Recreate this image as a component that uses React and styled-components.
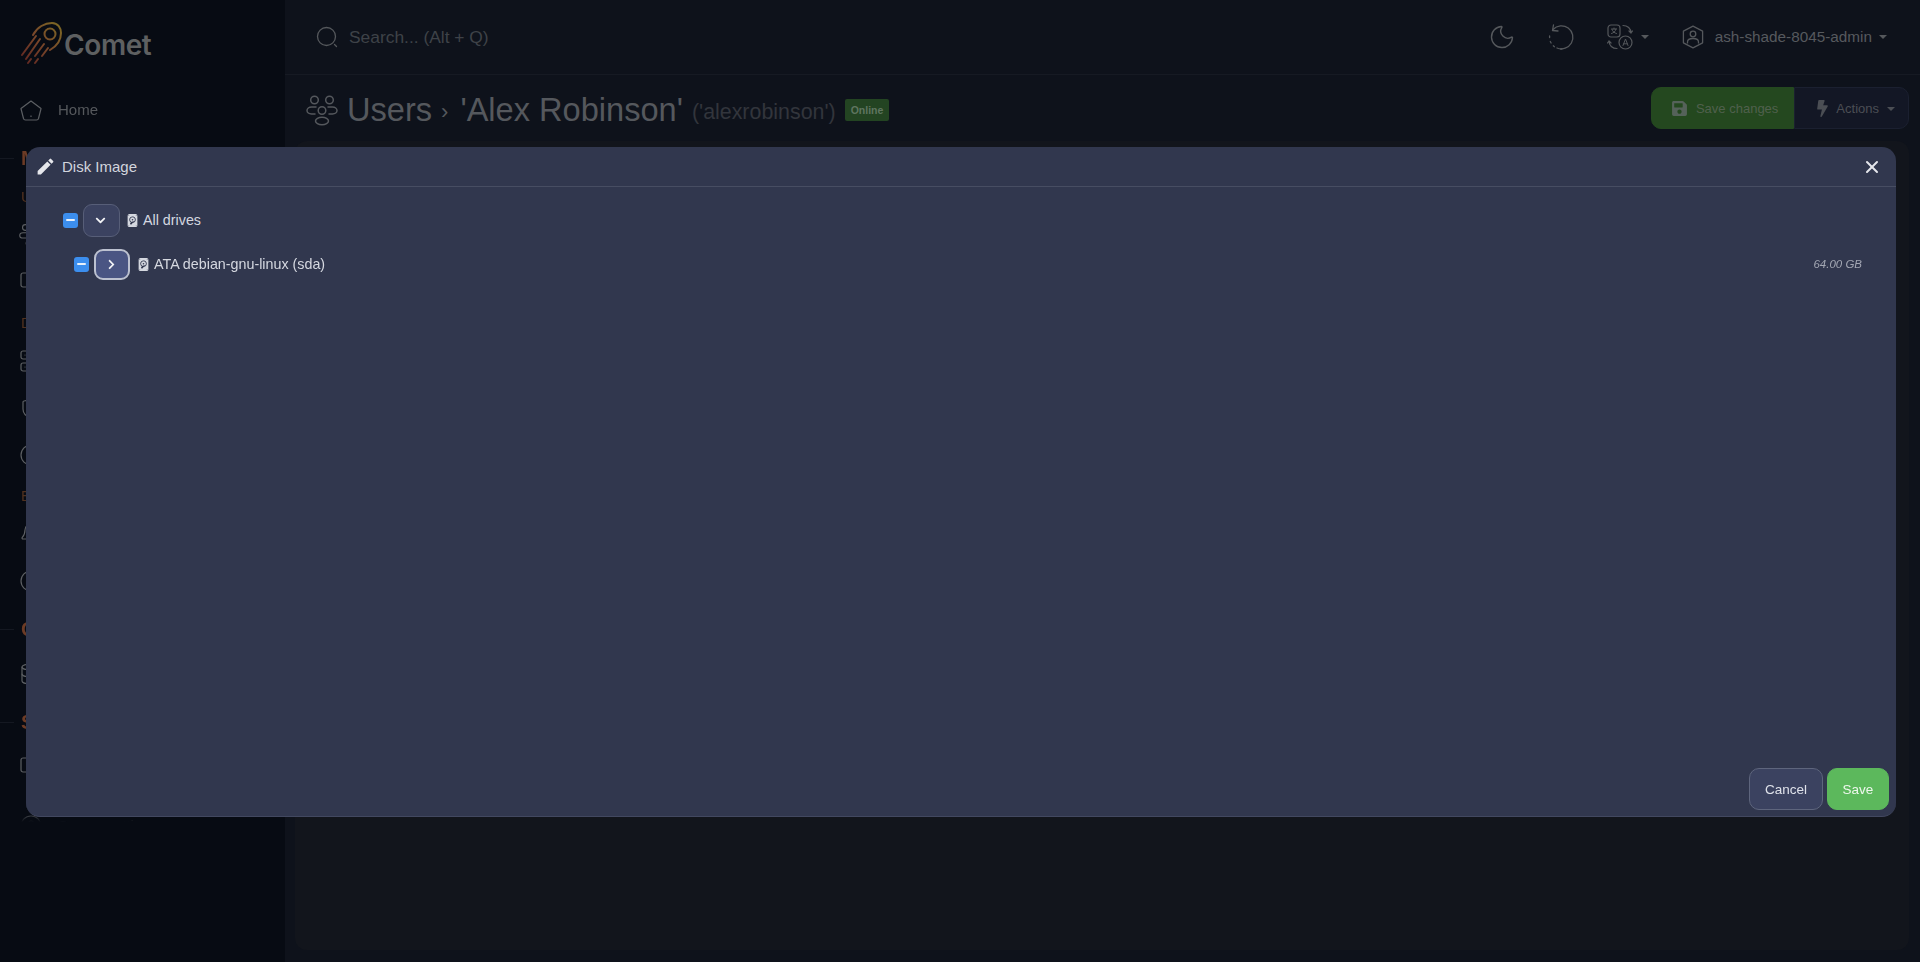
import styled, { createGlobalStyle } from "styled-components";
import { Moon, X, Shield, Server, Database, Monitor, Bell, Clock, CircleDot, CircleUser } from "lucide-react";
import { BsDeviceHddFill } from "react-icons/bs";
import { FaSave, FaBolt, FaChevronDown, FaChevronRight } from "react-icons/fa";
import { MdEdit } from "react-icons/md";

const GlobalStyle = createGlobalStyle`
  html, body {
    margin: 0;
    height: 100%;
    overflow: hidden;
    background: #070b13;
    font-family: "Liberation Sans", Arial, sans-serif;
  }
  * { box-sizing: border-box; }
`;

const Page = styled.div`
  display: flex;
  width: 100vw;
  height: 100vh;
  overflow: hidden;
`;

const Sidebar = styled.aside`
  width: 285px;
  flex-shrink: 0;
  background: #070b13;
  display: flex;
  flex-direction: column;
`;

const Brand = styled.div`
  height: 85px;
  flex-shrink: 0;
  padding: 21px 0 0 19px;
  display: flex;
  align-items: flex-start;
`;

const BrandName = styled.span`
  font-family: Inter, sans-serif;
  font-weight: 600;
  font-size: 28px;
  line-height: 48px;
  letter-spacing: -0.4px;
  color: #5e6061;
  margin-left: 1px;
`;

const Nav = styled.nav`
  height: 741px;
  flex-shrink: 0;
  overflow: hidden;
  padding-top: 1px;
  mask-image: linear-gradient(to bottom, #000 727px, transparent 737px);
`;

const NavItem = styled.div`
  height: 47px;
  padding-left: 19px;
  display: flex;
  align-items: center;
  gap: 15px;
  color: #55585c;
  font-size: 15px;
  margin-top: ${(p) => p.$gap || 0}px;
  svg { color: #5c5f63; }
`;

const SectionHead = styled.div`
  height: 46px;
  display: flex;
  align-items: center;
  gap: 7px;
  color: #6c3b25;
  font-weight: 700;
  font-size: 20px;
  padding-top: 5px;
  &::before {
    content: "";
    width: 14px;
    height: 1px;
    background: #141821;
  }
`;

const SubHead = styled.div`
  height: 32px;
  padding: 2px 0 0 21px;
  display: flex;
  align-items: center;
  color: #50311f;
  font-size: 15px;
`;

const Main = styled.main`
  flex: 1;
  min-width: 0;
  background: #0e121b;
  display: flex;
  flex-direction: column;
`;

const Topbar = styled.header`
  height: 75px;
  flex-shrink: 0;
  border-bottom: 1px solid #161a23;
  display: flex;
  align-items: center;
  padding: 0 33px 0 31px;
`;

const SearchText = styled.span`
  margin-left: 11px;
  font-size: 17.4px;
  color: #3e4248;
  flex: 1;
`;

const TopIcon = styled.span`
  display: flex;
  align-items: center;
  color: #55585c;
  margin-left: ${(p) => p.$left || 0}px;
`;

const Caret = styled.span`
  width: 0;
  height: 0;
  margin-left: ${(p) => p.$left || 0}px;
  border-left: 4px solid transparent;
  border-right: 4px solid transparent;
  border-top: 4px solid ${(p) => p.$color || "#55585c"};
`;

const UserName = styled.span`
  margin-left: 10px;
  font-size: 15.3px;
  color: #56595e;
`;

const TitleRow = styled.section`
  height: 66px;
  flex-shrink: 0;
  display: flex;
  align-items: center;
  padding: 0 11px 0 21px;
`;

const TitleGroup = styled.div`
  display: flex;
  align-items: center;
  padding-top: 3px;
`;

const Title = styled.h1`
  margin: 0 0 0 9px;
  font-weight: 400;
  font-size: 32.6px;
  color: #55585d;
  white-space: nowrap;
`;

const Crumb = styled.span`
  font-size: 22px;
  margin: 0 12px 0 9px;
  position: relative;
  top: -2px;
`;

const Login = styled.span`
  margin-left: 9px;
  font-size: 21.4px;
  color: #32353c;
  padding-top: 6px;
`;

const Badge = styled.span`
  margin-left: 9px;
  height: 22px;
  padding: 0 6px;
  display: flex;
  align-items: center;
  background: #234422;
  border-radius: 2px;
  font-size: 10.5px;
  font-weight: 700;
  color: #5f7560;
`;

const Actions = styled.div`
  margin-left: auto;
  display: flex;
  height: 42px;
`;

const SaveChanges = styled.div`
  display: flex;
  align-items: center;
  gap: 8px;
  font-size: 13px;
  color: #50604d;
  background: #24481f;
  border: 1px solid #24481f;
  border-radius: 10px 0 0 10px;
  padding: 1px 15px 0 19px;
`;

const ActionsButton = styled.div`
  display: flex;
  align-items: center;
  gap: 5px;
  font-size: 13px;
  color: #4b4e54;
  background: #131725;
  border: 1px solid #1b2030;
  border-radius: 0 10px 10px 0;
  padding: 1px 13px 0 19px;
`;

const Card = styled.div`
  flex: 1;
  margin: 0 11px 12px 10px;
  background: #12151c;
  border-radius: 12px;
`;

const Overlay = styled.div`
  position: fixed;
  inset: 0;
  padding: 147px 24px 0 26px;
`;

const Modal = styled.div`
  height: 670px;
  background: #31374e;
  border-bottom: 1px solid #424860;
  border-radius: 14px;
  display: flex;
  flex-direction: column;
`;

const ModalHeader = styled.div`
  height: 40px;
  flex-shrink: 0;
  padding: 0 14px 0 9px;
  display: flex;
  align-items: center;
  border-bottom: 1px solid #474d62;
  color: #d2d5dd;
  font-size: 15px;
  svg { color: #e6e7ec; }
`;

const ModalTitle = styled.span`
  margin-left: 6px;
  flex: 1;
`;

const ModalBody = styled.div`
  flex: 1;
  padding: 11px 34px 0 37px;
`;

const TreeRow = styled.div`
  height: 44px;
  display: flex;
  align-items: center;
  padding-left: ${(p) => p.$indent || 0}px;
  color: #d5d8e0;
  font-size: 14.3px;
  svg { flex-shrink: 0; }
`;

const Check = styled.span`
  width: 15px;
  height: 15px;
  flex-shrink: 0;
  background: #3c8eee;
  border-radius: 3px;
  display: flex;
  align-items: center;
  justify-content: center;
  &::after {
    content: "";
    width: 9px;
    height: 2px;
    border-radius: 1px;
    background: #e9f1fb;
  }
`;

const Toggle = styled.button`
  margin: 0 ${(p) => (p.$focused ? 7 : 6)}px 0 5px;
  width: ${(p) => (p.$focused ? 36 : 37)}px;
  height: ${(p) => (p.$focused ? 31 : 33)}px;
  padding: 0 ${(p) => (p.$focused ? 2 : 3)}px 0 0;
  display: flex;
  align-items: center;
  justify-content: center;
  border-radius: 9px;
  color: #f2f3f6;
  background: ${(p) => (p.$focused ? "#4a5583" : "#3b4260")};
  border: ${(p) => (p.$focused ? "2px solid #bcc1d0" : "1px solid #575e78")};
`;

const DriveName = styled.span`
  margin-left: 4px;
`;

const DriveSize = styled.span`
  margin-left: auto;
  font-size: 11.5px;
  font-style: italic;
  color: #a3a7b3;
`;

const ModalFooter = styled.div`
  flex-shrink: 0;
  display: flex;
  justify-content: flex-end;
  gap: 4px;
  padding: 0 7px 6px 0;
`;

const FooterButton = styled.button`
  height: 42px;
  border-radius: 10px;
  font: 13.5px "Liberation Sans", Arial, sans-serif;
  padding: 1px 0 0;
  width: ${(p) => (p.$save ? 62 : 74)}px;
  color: ${(p) => (p.$save ? "#edf7ec" : "#dfe2ea")};
  background: ${(p) => (p.$save ? "#5cb85c" : "#3b4260")};
  border: 1px solid ${(p) => (p.$save ? "#5cb85c" : "#5e657d")};
`;

function CometLogo() {
  return (
    <svg width="44" height="44" viewBox="0 0 44 44" fill="none" strokeLinecap="round">
      <defs>
        <linearGradient id="comet" x1="2" y1="42" x2="40" y2="4" gradientUnits="userSpaceOnUse">
          <stop offset="0" stopColor="#5f2420" />
          <stop offset="0.55" stopColor="#78472a" />
          <stop offset="1" stopColor="#7c6724" />
        </linearGradient>
      </defs>
      <g stroke="url(#comet)" strokeWidth="2">
        <path d="M14 14 C 18 6 26 2 33 2 C 39 2 42 7 42 12 C 42 19 38 25 31 29" />
        <circle cx="31" cy="13" r="5.5" />
        <path d="M17 15 L3 34" />
        <path d="M21 18 L7 38" />
        <path d="M25 23 L16 35" />
        <path d="M29 27 L23 35" />
        <path d="M12 38 L9 42" />
        <path d="M19 38 L16 42" />
      </g>
    </svg>
  );
}

function HomeIcon() {
  return (
    <svg width="24" height="24" viewBox="0 0 24 24" fill="none" stroke="currentColor" strokeWidth="1.2" strokeLinejoin="round">
      <path d="M12 3 L22 10.5 Q22 11 21.8 11.5 L19.5 20.5 Q19.2 22 17.5 22 H6.5 Q4.8 22 4.5 20.5 L2.2 11.5 Q2 11 2 10.5 Z" />
      <path d="M12 17.5 V19" />
    </svg>
  );
}

function SearchIcon() {
  return (
    <svg width="22" height="22" viewBox="0 0 22 22" fill="none" stroke="#55585c" strokeWidth="1.3" strokeLinecap="round">
      <circle cx="10.5" cy="10.5" r="9" />
      <path d="M18.5 18.5 L20.5 20.5" />
    </svg>
  );
}

function HistoryIcon() {
  return (
    <svg width="28" height="28" viewBox="0 0 28 28" fill="none" stroke="currentColor" strokeWidth="1.3" strokeLinecap="round" strokeLinejoin="round">
      <path d="M6 6.5 A11.5 11.5 0 1 1 10 25" />
      <path d="M6.5 2 L5.5 7.5 L11 8" />
      <path d="M2.6 13 V14.5" />
      <path d="M3.3 18.5 L4.1 20" />
      <path d="M6.3 22.8 L7.4 23.7" />
      <path d="M13.5 26 H15" />
    </svg>
  );
}

function TranslateIcon() {
  return (
    <svg width="26" height="26" viewBox="0 0 26 26" fill="none" stroke="currentColor" strokeWidth="1.2" strokeLinecap="round" strokeLinejoin="round">
      <rect x="1" y="1" width="12" height="12" rx="3" />
      <path d="M4.5 5 H9.5 M7 4 V5 M9 5 C8.5 7.5 6.5 9 4.5 9.5 M5 5.5 C5.5 7.5 7.5 9 9.5 9.5" strokeWidth="1" />
      <circle cx="18.5" cy="18.5" r="6.5" />
      <path d="M16 21.5 L18.5 15 L21 21.5 M16.8 19.8 H20.2" strokeWidth="1" />
      <path d="M16 1.5 C20.5 1.5 24 4.5 24 9 M24 9 L22 7 M24 9 L25.5 7" />
      <path d="M10 24.5 C5.5 24.5 2 21.5 2 17 M2 17 L0.5 19 M2 17 L4 19" />
    </svg>
  );
}

function UserHexIcon() {
  return (
    <svg width="24" height="24" viewBox="0 0 24 24" fill="none" stroke="currentColor" strokeWidth="1.3" strokeLinejoin="round">
      <path d="M12 1.2 L21.6 6.2 V17.8 L12 22.8 L2.4 17.8 V6.2 Z" />
      <circle cx="12" cy="9" r="2.8" />
      <path d="M6.5 18.5 V17 C6.5 14.5 9 13.5 12 13.5 C15 13.5 17.5 14.5 17.5 17 V18.5" />
    </svg>
  );
}

function GroupIcon({ size = 24, color = "currentColor" }) {
  return (
    <svg width={size} height={size} viewBox="0 0 32 32" fill="none" stroke={color} strokeWidth="1.5" strokeLinecap="round">
      <circle cx="8.5" cy="6" r="3.8" />
      <circle cx="23.5" cy="6" r="3.8" />
      <circle cx="16" cy="16.5" r="3.8" />
      <ellipse cx="16" cy="27" rx="6.5" ry="3.8" />
      <path d="M10 13 H5.5 C3 13 1 14.5 1 16.5 C1 18.5 3 20 5.5 20 H9" />
      <path d="M22 13 H26.5 C29 13 31 14.5 31 16.5 C31 18.5 29 20 26.5 20 H23" />
    </svg>
  );
}

function DriveRow({ indent, focused, name, size }) {
  return (
    <TreeRow $indent={indent}>
      <Check />
      <Toggle $focused={focused}>
        {focused ? <FaChevronRight size={11} /> : <FaChevronDown size={11} />}
      </Toggle>
      <BsDeviceHddFill size={13} />
      <DriveName>{name}</DriveName>
      {size && <DriveSize>{size}</DriveSize>}
    </TreeRow>
  );
}

export default function App() {
  return (
    <Page>
      <GlobalStyle />
      <Sidebar>
        <Brand>
          <CometLogo />
          <BrandName>Comet</BrandName>
        </Brand>
        <Nav>
          <NavItem><HomeIcon /> Home</NavItem>
          <SectionHead>Management</SectionHead>
          <SubHead>Users</SubHead>
          <NavItem><GroupIcon /> Accounts</NavItem>
          <NavItem><Monitor size={24} strokeWidth={1.2} /> Policies</NavItem>
          <SubHead>Devices</SubHead>
          <NavItem><Server size={24} strokeWidth={1.2} /> Devices</NavItem>
          <NavItem><Shield size={24} strokeWidth={1.2} /> Storage</NavItem>
          <NavItem><CircleDot size={24} strokeWidth={1.2} /> Vaults</NavItem>
          <SubHead>Events</SubHead>
          <NavItem><Bell size={24} strokeWidth={1.2} /> Alerts</NavItem>
          <NavItem><Clock size={24} strokeWidth={1.2} /> Job logs</NavItem>
          <SectionHead>Configuration</SectionHead>
          <NavItem><Database size={24} strokeWidth={1.2} /> Storage roles</NavItem>
          <SectionHead>System</SectionHead>
          <NavItem><Monitor size={24} strokeWidth={1.2} /> Server info</NavItem>
          <NavItem $gap={12}><CircleUser size={24} strokeWidth={1.2} /> Server settings</NavItem>
        </Nav>
      </Sidebar>
      <Main>
        <Topbar>
          <SearchIcon />
          <SearchText>Search... (Alt + Q)</SearchText>
          <TopIcon><Moon size={28} strokeWidth={1.2} /></TopIcon>
          <TopIcon $left={31}><HistoryIcon /></TopIcon>
          <TopIcon $left={32}><TranslateIcon /></TopIcon>
          <Caret $left={8} />
          <TopIcon $left={32}><UserHexIcon /></TopIcon>
          <UserName>ash-shade-8045-admin</UserName>
          <Caret $left={7} />
        </Topbar>
        <TitleRow>
          <TitleGroup>
            <GroupIcon size={32} color="#55585d" />
            <Title>Users<Crumb>›</Crumb>'Alex Robinson'</Title>
            <Login>('alexrobinson')</Login>
            <Badge>Online</Badge>
          </TitleGroup>
          <Actions>
            <SaveChanges><FaSave size={17} color="#55625a" /> Save changes</SaveChanges>
            <ActionsButton><FaBolt size={17} color="#4b4e54" /> Actions <Caret $left={3} $color="#4b4e54" /></ActionsButton>
          </Actions>
        </TitleRow>
        <Card />
      </Main>
      <Overlay>
        <Modal>
          <ModalHeader>
            <MdEdit size={21} />
            <ModalTitle>Disk Image</ModalTitle>
            <X size={20} strokeWidth={2.4} />
          </ModalHeader>
          <ModalBody>
            <DriveRow name="All drives" />
            <DriveRow indent={11} focused name="ATA debian-gnu-linux (sda)" size="64.00 GB" />
          </ModalBody>
          <ModalFooter>
            <FooterButton>Cancel</FooterButton>
            <FooterButton $save>Save</FooterButton>
          </ModalFooter>
        </Modal>
      </Overlay>
    </Page>
  );
}
